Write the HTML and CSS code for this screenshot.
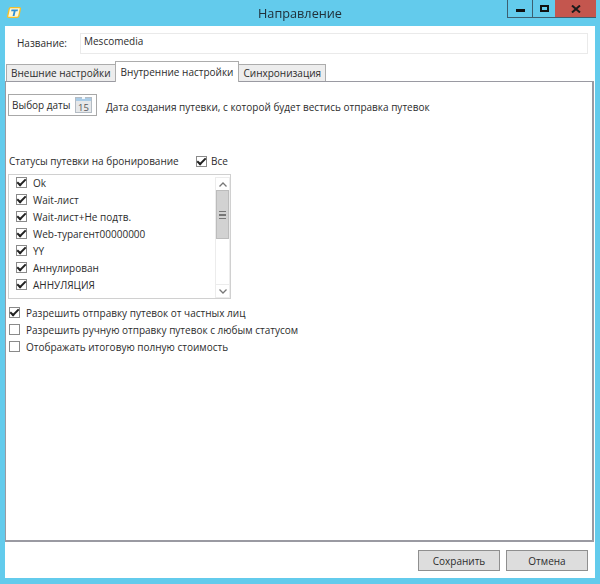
FILE: index.html
```html
<!DOCTYPE HTML>
<html>
<head>
<meta charset="utf-8">
<title>Направление</title>
<link rel="stylesheet" href="styles.css">
</head>
<body>
<div class="window">
  <div class="titlebar">
    <div class="app-icon">
      <svg viewBox="0 0 14 11" width="14" height="11">
        <path d="M3.500 0.700 H12.500 Q13.600 0.700 13.300 2 L11.800 9 Q11.500 10.300 10.300 10.300 H1.500 Q0.400 10.300 0.700 9 L2.200 2 Q2.500 0.700 3.500 0.700 Z" fill="#fff8d8" stroke="#f2bf2c" stroke-width="1.300"/>
        <path d="M4.500 2.500 H11 L10.600 4.200 H8.600 L7.500 9 H5.600 L6.700 4.200 H4.100 Z" fill="#2f8fd6"/>
      </svg>
    </div>
    <div class="title">Направление</div>
    <div class="controls">
      <div class="ctl ctl-min"><span class="min-glyph"></span></div>
      <div class="ctl ctl-max"><span class="max-glyph"></span></div>
      <div class="ctl ctl-close">
        <svg viewBox="0 0 10 8" width="10" height="8"><path d="M1 0.500 L9 7.500 M9 0.500 L1 7.500" stroke="#1c1c1c" stroke-width="2"/></svg>
      </div>
    </div>
  </div>

  <div class="client">
    <div class="name-row">
      <label class="name-label">Название:</label>
      <div class="textbox">Mescomedia</div>
    </div>

    <div class="tabs">
      <div class="tab">Внешние настройки</div>
      <div class="tab tab-active">Внутренние настройки</div>
      <div class="tab">Синхронизация</div>
    </div>

    <div class="panel">
      <div class="date-row">
        <div class="datepicker">
          <span>Выбор даты</span>
          <svg class="cal" viewBox="0 0 17 16" width="17" height="16">
            <rect x="0.500" y="0.500" width="16" height="15" fill="#e6e8ea" stroke="#b4bcc4"/>
            <rect x="1" y="1" width="15" height="3" fill="#a9cbe6"/>
            <rect x="7" y="0" width="3" height="2" fill="#f4f8fb"/>
            <text x="8.500" y="13.500" class="cal-day">15</text>
          </svg>
        </div>
        <span class="date-hint">Дата создания путевки, с которой будет вестись отправка путевок</span>
      </div>

      <div class="status-head">
        <span>Статусы путевки на бронирование</span>
        <div class="check-item all"><span class="box on"></span>Все</div>
      </div>

      <div class="listbox">
        <div class="list-items">
          <div class="check-item"><span class="box on"></span>Ok</div>
          <div class="check-item"><span class="box on"></span>Wait-лист</div>
          <div class="check-item"><span class="box on"></span>Wait-лист+Не подтв.</div>
          <div class="check-item"><span class="box on"></span>Web-турагент00000000</div>
          <div class="check-item"><span class="box on"></span>YY</div>
          <div class="check-item"><span class="box on"></span>Аннулирован</div>
          <div class="check-item"><span class="box on"></span>АННУЛЯЦИЯ</div>
        </div>
        <div class="scrollbar">
          <div class="arrow-btn"><svg viewBox="0 0 8 5" width="8" height="5"><path d="M0.500 4.500 L4 1 L7.500 4.500" fill="none" stroke="#777" stroke-width="1.300"/></svg></div>
          <div class="thumb"><span class="grip"></span></div>
          <div class="arrow-btn arrow-down"><svg viewBox="0 0 8 5" width="8" height="5"><path d="M0.500 0.500 L4 4 L7.500 0.500" fill="none" stroke="#777" stroke-width="1.300"/></svg></div>
        </div>
      </div>

      <div class="options">
        <div class="check-item"><span class="box on"></span>Разрешить отправку путевок от частных лиц</div>
        <div class="check-item"><span class="box"></span>Разрешить ручную отправку путевок с любым статусом</div>
        <div class="check-item"><span class="box"></span>Отображать итоговую полную стоимость</div>
      </div>
    </div>

    <div class="footer">
      <button class="btn">Сохранить</button>
      <button class="btn">Отмена</button>
    </div>
  </div>
</div>
</body>
</html>
```
FILE: styles.css
```css
/* window frame */
html, body { margin: 0; padding: 0; }
body {
  width: 600px; height: 584px; overflow: hidden;
  background: #63cbec;
  font-family: "Open Sans", "Noto Sans", sans-serif;
  font-size: 10px;
  color: #2c2c2c;
}
.window { display: flex; flex-direction: column; height: 584px; padding: 0 5px 6px; box-sizing: border-box; filter: blur(0.4px); }

/* title bar */
.titlebar { height: 26px; flex: none; display: grid; grid-template-columns: 1fr auto 1fr; }
.app-icon { padding: 7px 0 0 2px; line-height: 0; }
.title { font-size: 12.7px; line-height: 26px; color: #20303a; }
.controls { justify-self: end; display: flex; height: 18px; width: 89px; margin-right: -1px; background: #63cbec; border-bottom: 1px solid #3c5f70; box-sizing: border-box; }
.ctl { display: flex; align-items: center; justify-content: center; }
.ctl-min { width: 26px; border: 1px solid #3c5f70; border-width: 0 1px; box-sizing: border-box; }
.ctl-max { width: 22px; }
.ctl-close { flex: 1; background: #c4564e; }
.min-glyph { width: 9px; height: 3px; background: #111; margin-top: 3px; }
.max-glyph { width: 5px; height: 3px; border: 2px solid #111; }

/* client area */
.client { flex: 1; display: flex; flex-direction: column; background: #fff; }
.name-row { display: flex; align-items: center; padding: 7px 7px 0 12px; height: 21px; }
.name-label { width: 63px; margin-top: -2px; }
.textbox { flex: 1; height: 21px; line-height: 15px; border: 1px solid #eaeaea; box-sizing: border-box; padding-left: 3px; }

/* tabs */
.tabs { display: flex; align-items: flex-end; height: 21px; margin-top: 6px; padding-left: 1px; }
.tab {
  height: 16px; line-height: 16px; padding: 0 4px; margin-right: -1px;
  background: #ededed; border: 1px solid #acacac; border-bottom: 0;
}
.tab-active {
  height: 20px; line-height: 21px; padding: 0 5px; background: #fff;
  position: relative; z-index: 1; margin-bottom: -1px;
}
.panel { height: 461px; box-sizing: border-box; border: 1px solid #9a9aa2; border-width: 1px 2px 2px 1px; margin-right: 1px; padding: 12px 3px 0 2px; }

.date-row { display: flex; align-items: center; height: 22px; gap: 9px; }
.datepicker {
  display: flex; align-items: center; justify-content: space-between;
  width: 89px; height: 22px; box-sizing: border-box; border: 1px solid #a8a8a8; padding: 0 4px 0 3px;
}
.date-hint { margin-top: 3px; }
.cal-day { font-size: 9.5px; fill: #555; text-anchor: middle; }

.status-head { display: flex; align-items: center; height: 16px; margin-top: 37px; }
.status-head > span { width: 187px; padding-left: 1px; margin-top: -1px; }

/* checkboxes */
.check-item { display: flex; align-items: center; gap: 6px; height: 17px; }
.all { gap: 4px; }
.box {
  width: 9px; height: 9px; flex: none; position: relative;
  border: 1px solid #8a8a8a; background: #fff;
}
.box.on::after {
  content: ""; position: absolute; left: 2px; top: -1px;
  width: 3px; height: 7px; border: solid #222; border-width: 0 2px 2px 0;
  transform: rotate(45deg);
}

/* list */
.listbox { display: flex; width: 223px; height: 125px; box-sizing: border-box; border: 1px solid #d0d0d0; margin-top: 5px; }
.list-items { flex: 1; margin-top: -1px; padding-left: 7px; }
.scrollbar { width: 15px; margin-top: 2px; display: flex; flex-direction: column; border: 1px solid #ececec; box-sizing: border-box; }
.arrow-btn { height: 12px; display: flex; align-items: center; justify-content: center; }
.thumb { height: 49px; box-sizing: border-box; border: 1px solid #bcbcbc; background: #d2d2d2; display: flex; align-items: center; justify-content: center; }
.grip { width: 7px; height: 6px; border-top: 1px solid #777; border-bottom: 1px solid #777; background: linear-gradient(#d2d2d2 2px, #777 2px, #777 4px, #d2d2d2 4px); }
.arrow-down { margin-top: auto; border-top: 1px solid #ececec; }

.options { margin-top: 5px; padding-left: 1px; }

/* footer */
.footer { display: flex; justify-content: flex-end; gap: 6px; padding: 8px 7px 0 0; }
.btn {
  width: 82px; height: 21px; padding: 0; font: inherit; color: #2c2c2c;
  background: #dddddd; border: 1px solid #8f8f8f;
}
```
